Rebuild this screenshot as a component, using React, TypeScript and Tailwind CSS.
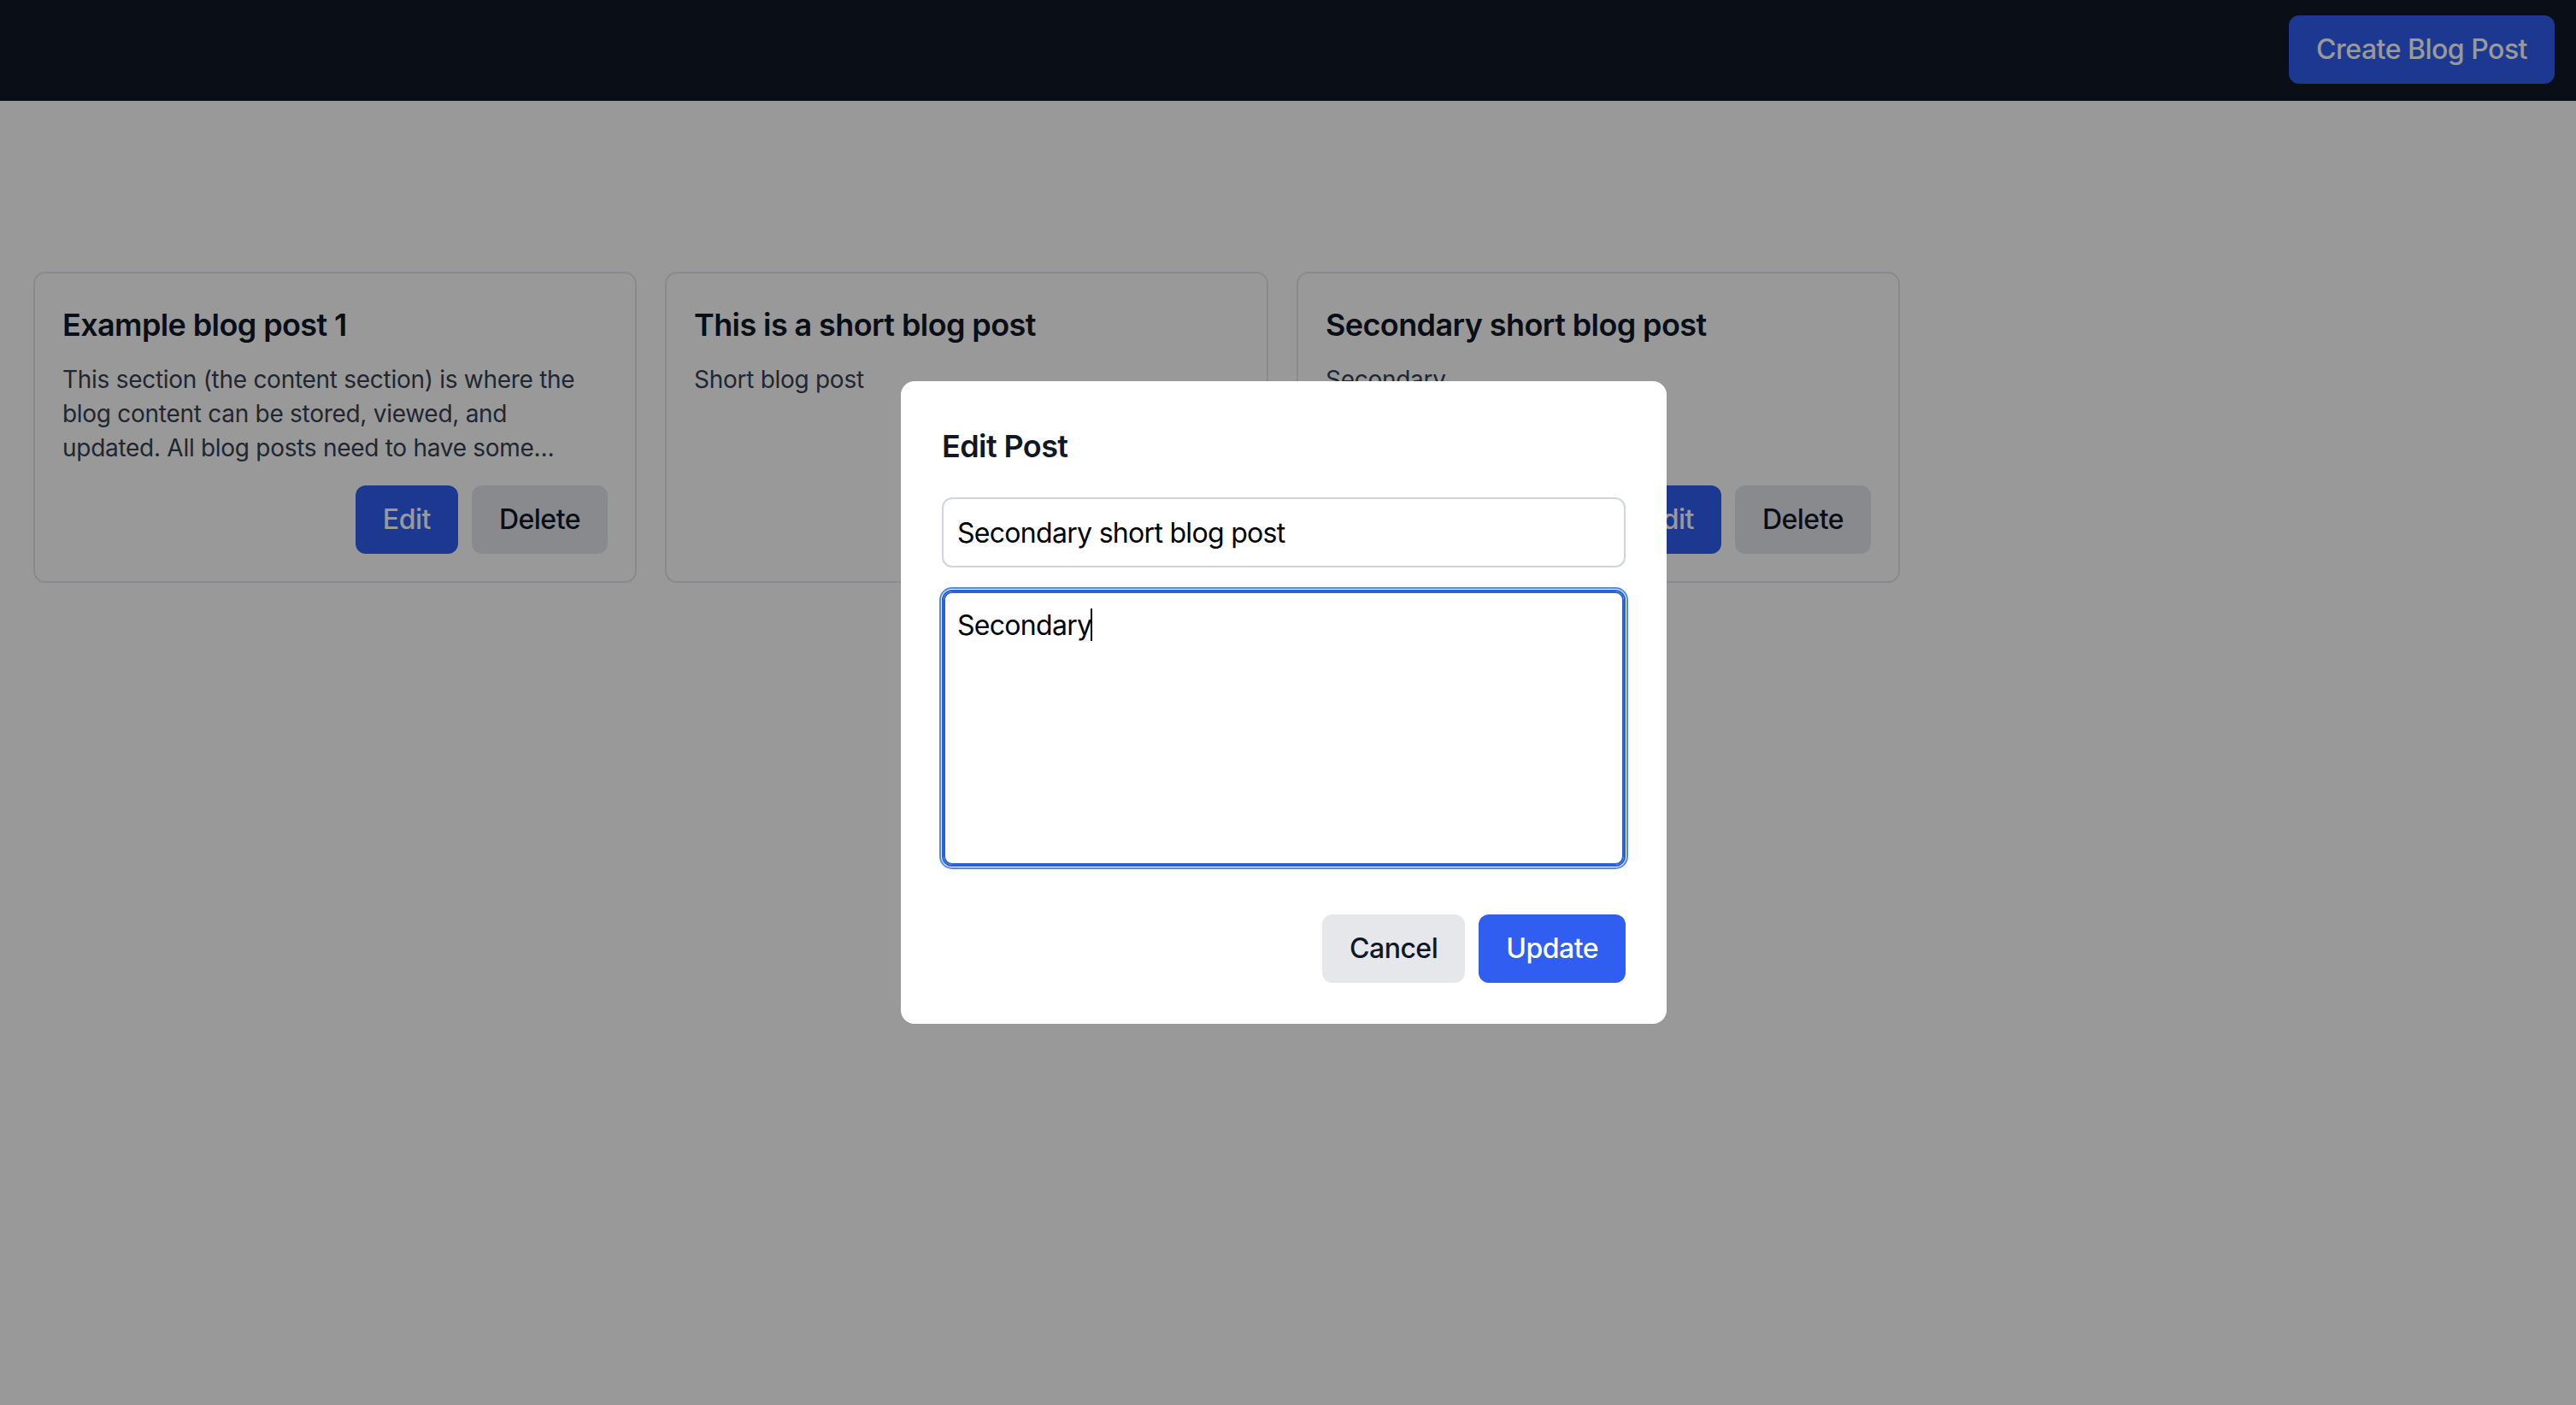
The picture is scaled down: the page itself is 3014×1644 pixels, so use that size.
import React from "react";

type Post = { id: number; title: string; content: string };

const POSTS: Post[] = [
  {
    id: 1,
    title: "Example blog post 1",
    content:
      "This section (the content section) is where the blog content can be stored, viewed, and updated. All blog posts need to have some content in them so this is a long one.",
  },
  { id: 2, title: "This is a short blog post", content: "Short blog post" },
  { id: 3, title: "Secondary short blog post", content: "Secondary" },
];

const btn = "h-[80px] px-[32px] rounded-[12px] text-[32px] font-medium tracking-[-0.5px]";

function PostCard({ post }: { post: Post }) {
  return (
    <div className="w-[706px] flex flex-col rounded-[14px] border-2 border-gray-200 bg-white p-[32px]">
      <h2 className="text-[36px] leading-[56px] font-semibold tracking-[-0.6px] text-gray-900 mb-[16px]">
        {post.title}
      </h2>
      <p className="text-[28px] leading-[40px] tracking-[-0.28px] text-gray-700 line-clamp-3">{post.content}</p>
      <div className="mt-auto pt-[24px] flex justify-end gap-[16px]">
        <button className={`${btn} bg-[#2f5ef0] text-white`}>Edit</button>
        <button className={`${btn} bg-gray-200 text-gray-900`}>Delete</button>
      </div>
    </div>
  );
}

export default function App() {
  return (
    <div className="min-h-screen bg-white font-['Inter','Liberation_Sans',sans-serif]">
      {/* Top bar */}
      <header className="h-[118px] bg-[#111827] flex justify-end items-start pt-[18px] pr-[25px]">
        <button className={`${btn} bg-[#2f5ef0] text-white`}>Create Blog Post</button>
      </header>

      {/* Posts */}
      <main className="pt-[200px] pl-[39px] flex gap-[33px]">
        {POSTS.map((p) => (
          <PostCard key={p.id} post={p} />
        ))}
      </main>

      {/* Edit modal */}
      <div className="fixed inset-0 bg-black/40 flex items-center justify-center pr-[10px]">
        <div className="w-[896px] bg-white rounded-[16px] p-[48px]">
          <h3 className="text-[36px] leading-[56px] font-semibold tracking-[-0.6px] text-gray-900 mb-[32px]">
            Edit Post
          </h3>
          <input
            readOnly
            value="Secondary short blog post"
            className="block w-full h-[82px] px-[16px] border-2 border-gray-300 rounded-[12px] text-[32px] tracking-[-0.7px] text-black outline-none mb-[26px]"
          />
          <div className="relative">
            <textarea
              readOnly
              value="Secondary"
              className="block w-full h-[324px] px-[16px] py-[16px] text-[32px] leading-[48px] tracking-[-0.7px] text-black resize-none rounded-[12px] border-2 border-[#2a62d0] outline-none shadow-[inset_0_0_0_2px_#2a62d0,0_0_0_1px_#ffffff,0_0_0_3px_#4f8af3]"
            />
            <span className="absolute left-[174px] top-[22px] h-[38px] w-[2px] bg-black" />
          </div>
          <div className="mt-[56px] flex justify-end gap-[16px]">
            <button className={`${btn} bg-gray-200 text-gray-900`}>Cancel</button>
            <button className={`${btn} bg-[#2f5ef0] text-white`}>Update</button>
          </div>
        </div>
      </div>
    </div>
  );
}
